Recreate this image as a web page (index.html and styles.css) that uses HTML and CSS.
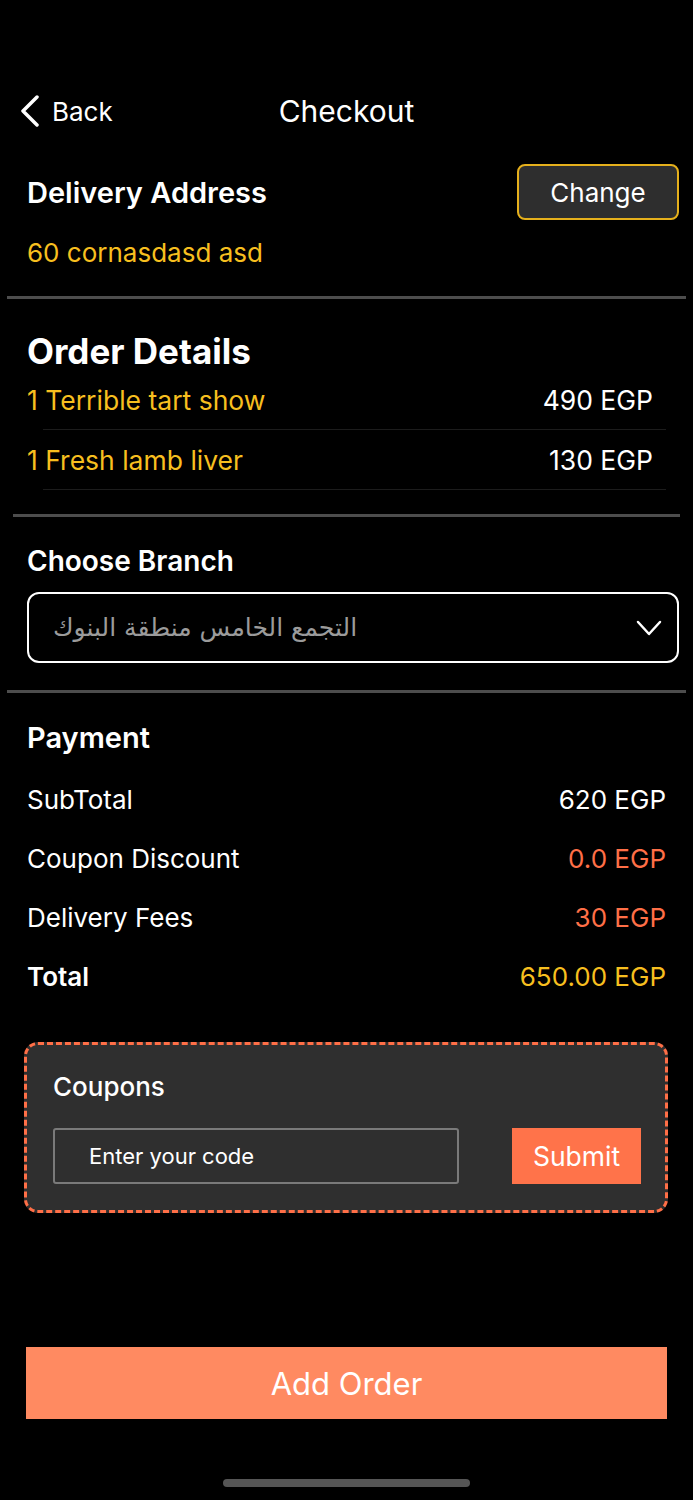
FILE: index.html
```html
<!DOCTYPE html>
<html lang="en">
<head>
    <meta charset="UTF-8">
    <meta name="viewport" content="width=device-width, initial-scale=1.0">
    <title>Checkout</title>
    <link rel="stylesheet" href="styles.css">
</head>
<body>
    <div class="nav">
        <div class="back">
            <svg width="20" height="32" viewBox="0 0 20 32"><polyline points="17,2 3,16 17,30" fill="none" stroke="#fff" stroke-width="3.5" stroke-linecap="round" stroke-linejoin="round"/></svg>
            <span>Back</span>
        </div>
        <div class="title">Checkout</div>
        <div></div>
    </div>

    <div class="section address">
        <div class="address-head">
            <h2>Delivery Address</h2>
            <button class="change-btn">Change</button>
        </div>
        <p class="address-text">60 cornasdasd asd</p>
    </div>
    <div class="divider"></div>

    <div class="section">
        <h1 class="order-title">Order Details</h1>
        <div class="items">
            <div class="item">
                <span class="item-name">1 Terrible tart show</span>
                <span class="item-price">490 EGP</span>
            </div>
            <div class="item">
                <span class="item-name">1 Fresh lamb liver</span>
                <span class="item-price">130 EGP</span>
            </div>
        </div>
    </div>
    <div class="divider short"></div>

    <div class="section">
        <h2 class="branch-title">Choose Branch</h2>
        <div class="select">
            <span class="select-text">التجمع الخامس منطقة البنوك</span>
            <svg width="26" height="16" viewBox="0 0 26 16"><polyline points="2,2 13,14 24,2" fill="none" stroke="#fff" stroke-width="2.5" stroke-linecap="round" stroke-linejoin="round"/></svg>
        </div>
    </div>
    <div class="divider branch-divider"></div>

    <div class="section">
        <h2 class="payment-title">Payment</h2>
        <div class="pay-row"><span>SubTotal</span><span>620 EGP</span></div>
        <div class="pay-row"><span>Coupon Discount</span><span class="orange">0.0 EGP</span></div>
        <div class="pay-row"><span>Delivery Fees</span><span class="orange">30 EGP</span></div>
        <div class="pay-row total"><span>Total</span><span class="yellow">650.00 EGP</span></div>
    </div>

    <div class="coupons">
        <h3>Coupons</h3>
        <div class="coupon-row">
            <input type="text" placeholder="Enter your code">
            <button class="submit-btn">Submit</button>
        </div>
    </div>

    <button class="add-order">Add Order</button>
    <div class="home-bar"></div>
</body>
</html>
```

FILE: styles.css
```css
body {
    margin: 0;
    background-color: #000;
    color: #fff;
    font-family: Inter, Roboto, "Noto Sans", sans-serif;
    padding-top: 89px;
    width: 693px;
}
h1, h2, h3, p {
    margin: 0;
}
.nav {
    display: grid;
    grid-template-columns: 1fr auto 1fr;
    align-items: center;
    height: 44px;
}
.back {
    display: flex;
    align-items: center;
    gap: 12px;
    padding-left: 20px;
    font-size: 26px;
}
.back svg {
    display: block;
}
.title {
    font-size: 30px;
}
.section {
    padding: 0 27px;
}
.address-head {
    display: flex;
    justify-content: space-between;
    align-items: center;
    margin-top: 31px;
    margin-right: -13px;
}
.address-head h2 {
    font-size: 29px;
    font-weight: 600;
}
.change-btn {
    width: 162px;
    height: 56px;
    background-color: #2e2e2e;
    border: 2px solid #e5b01c;
    border-radius: 8px;
    color: #fff;
    font-family: inherit;
    font-size: 26px;
}
.address-text {
    margin-top: 17px;
    color: #f7bf1f;
    font-size: 26px;
    line-height: 32px;
}
.divider {
    height: 3px;
    background-color: #4d4d4d;
    margin: 27px 7px 0;
}
.divider.short {
    margin: 24px 13px 0;
}
.order-title {
    margin-top: 33px;
    font-size: 35px;
    font-weight: 700;
    line-height: 38px;
}
.item {
    display: flex;
    justify-content: space-between;
    align-items: center;
    height: 60px;
    padding-right: 13px;
    background: linear-gradient(#1c1c1c, #1c1c1c) no-repeat 16px 100% / calc(100% - 16px) 1px;
    font-size: 26.5px;
}
.item-name {
    color: #f7bf1f;
}
.branch-title {
    margin-top: 28px;
    font-size: 28px;
    font-weight: 600;
    line-height: 32px;
}
.select {
    display: flex;
    justify-content: space-between;
    align-items: center;
    height: 67px;
    margin-top: 15px;
    margin-right: -13px;
    padding: 0 15px 0 24px;
    border: 2px solid #fff;
    border-radius: 12px;
}
.select-text {
    color: #9b9b9b;
    font-family: "DejaVu Sans", "Noto Sans", sans-serif;
    font-size: 25px;
}
.branch-divider {
    margin-top: 27px;
}
.payment-title {
    margin-top: 29px;
    margin-bottom: 16px;
    font-size: 29px;
    font-weight: 600;
    line-height: 32px;
}
.pay-row {
    display: flex;
    justify-content: space-between;
    align-items: center;
    height: 59px;
    font-size: 26px;
}
.pay-row.total span:first-child {
    font-weight: 600;
}
.orange {
    color: #ff6f47;
}
.yellow {
    color: #f7bf1f;
}
.coupons {
    margin: 36px 25px 0 24px;
    padding: 27px 24px 26px 26px;
    background-color: #2f2f2f;
    border: 3px dashed #ff6f47;
    border-radius: 14px;
}
.coupons h3 {
    font-size: 26px;
    font-weight: 500;
    line-height: 30px;
}
.coupon-row {
    display: flex;
    justify-content: space-between;
    margin-top: 26px;
}
.coupon-row input {
    width: 406px;
    height: 56px;
    box-sizing: border-box;
    padding: 0 0 0 34px;
    background-color: #2f2f2f;
    border: 2px solid #7a7a7a;
    border-radius: 3px;
    color: #fff;
    font-family: inherit;
    font-size: 22px;
}
.coupon-row input::placeholder {
    color: #fff;
}
.submit-btn {
    width: 129px;
    height: 56px;
    background-color: #ff734a;
    border: none;
    color: #fff;
    font-family: inherit;
    font-size: 26.5px;
}
.add-order {
    display: block;
    width: 641px;
    height: 72px;
    margin: 134px 0 0 26px;
    background-color: #ff8a61;
    border: none;
    color: #fff;
    font-family: inherit;
    font-size: 31px;
}
.home-bar {
    width: 247px;
    height: 8px;
    margin: 60px auto 0;
    background-color: #555;
    border-radius: 4px;
}
```
